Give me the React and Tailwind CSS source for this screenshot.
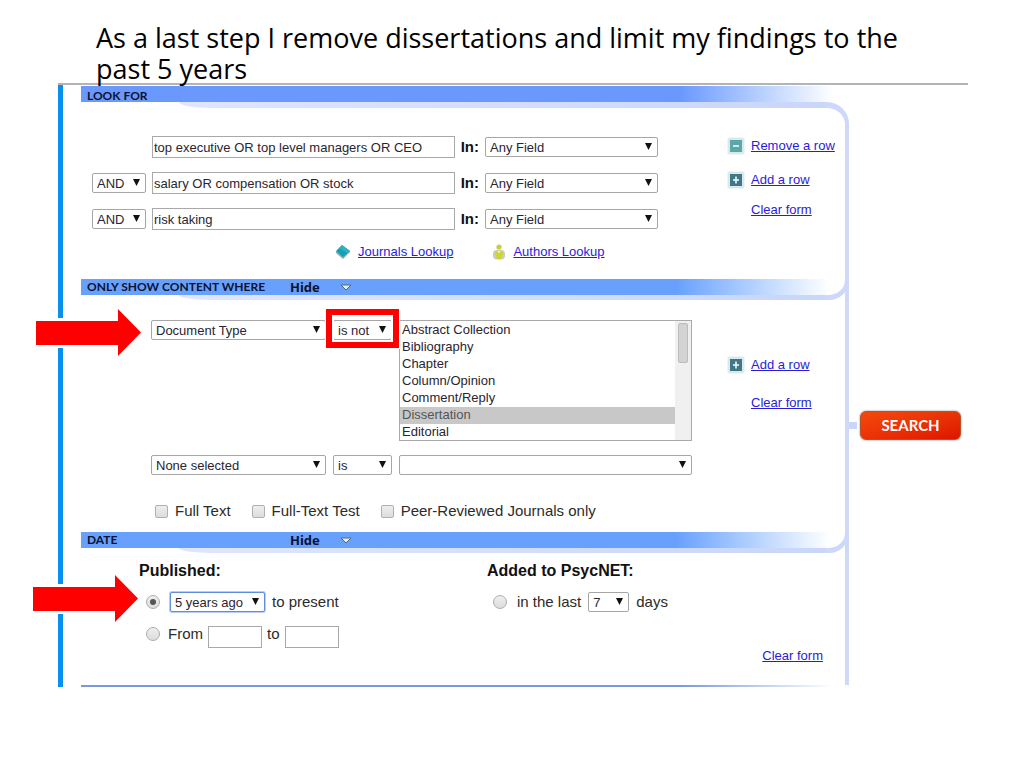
import React from 'react';

const documentTypes = [
  'Abstract Collection',
  'Bibliography',
  'Chapter',
  'Column/Opinion',
  'Comment/Reply',
  'Dissertation',
  'Editorial',
];

const Select = ({ label, value, className = '', selectClassName = 'border-[#a6a6a6]' }) => {
  return (
    <div className={`relative shrink-0 ${className}`}>
      <select
        aria-label={label}
        defaultValue={value}
        className={`block h-5 w-full appearance-none rounded-xs border bg-white pt-px pl-1 text-[13px] leading-[17px] text-[#2a2530] ${selectClassName}`}
      >
        <option value={value}>{value}</option>
      </select>
      <svg className="pointer-events-none absolute top-1.5 right-1.5 h-[7px] w-[7px]" viewBox="0 0 7 7">
        <path d="M0 0h7L3.5 7z" fill="#111" />
      </svg>
    </div>
  );
};

const TextBox = ({ label, value = '', className = '' }) => {
  return (
    <input
      type="text"
      aria-label={label}
      defaultValue={value}
      className={`h-[22px] border border-[#a9a9a9] bg-white px-px text-[13px] text-[#2a2530] ${className}`}
    />
  );
};

const Link = ({ children, className = '' }) => {
  return (
    <a href="#" className={`text-[13px] leading-5 text-[#2a1bd8] underline ${className}`}>
      {children}
    </a>
  );
};

const RowIcon = ({ kind }) => {
  return (
    <svg className="h-[18px] w-[18px]" viewBox="0 0 18 18">
      <rect width="18" height="18" rx="3" fill="#eef5f7" />
      <rect x="1" y="1" width="16" height="16" rx="2" fill="#d9e9ed" />
      <rect x="3" y="3" width="12" height="12" fill={kind === 'remove' ? '#5aa9a6' : '#417787'} />
      <path d="M6 9h6" stroke="#e9fbfb" strokeWidth="1.6" />
      {kind === 'add' && <path d="M9 5.5v7" stroke="#e9fbfb" strokeWidth="1.6" />}
    </svg>
  );
};

const RowLink = ({ kind, children }) => {
  return (
    <div className="flex h-5 items-center gap-1.5">
      {kind ? <RowIcon kind={kind} /> : <span className="w-[18px]" />}
      <Link>{children}</Link>
    </div>
  );
};

const Arrow = ({ className }) => {
  return (
    <svg className={`absolute right-full h-[47px] w-[105px] max-w-none ${className}`} viewBox="0 0 105 47">
      <rect y="9" width="82" height="30" fill="#fff" />
      <path d="M0 12h82V0l23 23.5L82 47V36H0z" fill="#fe0000" />
    </svg>
  );
};

const SectionTitle = ({ children }) => {
  return (
    <h2 className="pl-1.5 font-['Lato'] text-xs leading-4 font-bold whitespace-nowrap text-[#0b1230]">{children}</h2>
  );
};

const FoldHeader = ({ title }) => {
  return (
    <div className="relative h-[21px] border-r-4 border-[#cdd8fa]">
      <div className="flex h-4 items-center bg-linear-to-r from-[#68a1fd] from-78% to-white to-98%">
        <div className="w-[209px]">
          <SectionTitle>{title}</SectionTitle>
        </div>
        <button type="button" className="flex items-center gap-5 font-['Noto_Sans'] text-[13px] leading-4 font-bold text-[#0b1230]">
          Hide
          <svg className="h-[7px] w-3" viewBox="0 0 12 7">
            <path d="M1 1h10L6 6z" fill="#e8efe0" stroke="#47688f" />
          </svg>
        </button>
      </div>
      <div className="mr-4 ml-[98px] h-[5px] rounded-bl-[32px_5px] bg-linear-to-r from-[#dfe5fc] to-[#c9d6fa]" />
      <div className="absolute top-0 -right-1 h-[21px] w-6 rounded-br-[20px] border-r-4 border-b-[5px] border-[#cdd8fa]" />
    </div>
  );
};

const CheckBox = ({ children }) => {
  return (
    <label className="flex items-center gap-[7px]">
      <input
        type="checkbox"
        className="h-[13px] w-[13px] appearance-none rounded-xs border border-[#b0b0b0] bg-linear-to-b from-[#eeeeee] to-[#dcdcdc]"
      />
      {children}
    </label>
  );
};

const Radio = ({ label, name, checked }) => {
  return (
    <input
      type="radio"
      name={name}
      aria-label={label}
      defaultChecked={checked}
      className="flex h-3.5 w-3.5 shrink-0 appearance-none items-center justify-center rounded-full border border-[#adadad] bg-linear-to-b from-[#eeeeee] to-[#dcdcdc] checked:before:h-1.5 checked:before:w-1.5 checked:before:rounded-full checked:before:bg-[#555555]"
    />
  );
};

const SearchRow = ({ operator, value }) => {
  return (
    <div className="flex h-[22px] items-center gap-1.5">
      {operator ? <Select label="Operator" value={operator} className="w-[54px]" /> : <span className="w-[54px]" />}
      <TextBox label="Search term" value={value} className="min-w-0 flex-1" />
      <span className="text-[15px] font-bold text-[#111]">In:</span>
      <Select label="Field" value="Any Field" className="w-[173px]" />
    </div>
  );
};

const LookFor = () => {
  return (
    <section>
      <div className="h-4 bg-linear-to-r from-[#6b98fd] from-78% to-white to-98% pt-0.5">
        <SectionTitle>LOOK FOR</SectionTitle>
      </div>
      <div className="ml-[98px] flex h-[23px]">
        <div className="h-1.5 flex-1 rounded-bl-[32px_6px] bg-linear-to-r from-[#dfe5fc] to-[#c9d6fa]" />
        <div className="w-6 rounded-tr-[22px] border-t-[6px] border-r-4 border-[#cdd8fa]" />
      </div>
      <div className="flex border-r-4 border-[#cdd8fa] pt-[11px] pb-[17px]">
        <div className="flex-1 pr-[69px] pl-[11px]">
          <div className="flex flex-col gap-3.5">
            <SearchRow value="top executive OR top level managers OR CEO" />
            <SearchRow operator="AND" value="salary OR compensation OR stock" />
            <SearchRow operator="AND" value="risk taking" />
          </div>
          <div className="mt-3 flex h-5 items-center pl-[243px]">
            <svg className="mr-[7px] h-4 w-4" viewBox="0 0 16 16">
              <path d="M1 9l7 6 7-7v-1.500L8 12 1 7z" fill="#8fa9b0" />
              <path d="M7 1l8 6-7 6-7-6z" fill="#12a0b4" />
              <path d="M7 1l8 6-3 2-8-5z" fill="#2fb0c0" />
            </svg>
            <Link>Journals Lookup</Link>
            <svg className="mr-2 ml-10 h-4 w-3" viewBox="0 0 12 16">
              <rect y="6" width="12" height="9.500" rx="4" fill="#c9cdbb" />
              <circle cx="6" cy="3" r="2.600" fill="#c8ce3a" />
              <path d="M3.500 7h5l2 3.500-2 1V15h-5v-3.500l-2-1z" fill="#cdd62e" />
              <path d="M4.500 7h3L6 9.500z" fill="#f4f6cf" />
            </svg>
            <Link>Authors Lookup</Link>
          </div>
        </div>
        <div className="flex w-[118px] flex-col">
          <RowLink kind="remove">Remove a row</RowLink>
          <div className="mt-3.5">
            <RowLink kind="add">Add a row</RowLink>
          </div>
          <div className="mt-2.5">
            <RowLink>Clear form</RowLink>
          </div>
        </div>
      </div>
    </section>
  );
};

const ContentFilter = () => {
  return (
    <section>
      <FoldHeader title="ONLY SHOW CONTENT WHERE" />
      <div className="flex border-r-4 border-[#cdd8fa] pt-5 pb-[11px]">
        <div className="flex-1 pr-[35px] pl-[70px]">
          <div className="flex items-start gap-[7px]">
            <div className="relative">
              <Arrow className="-top-[11px] mr-2.5" />
              <Select label="Limit by" value="Document Type" className="w-[175px]" />
            </div>
            <div className="relative z-10">
              <Select label="Condition" value="is not" className="w-[59px]" />
              <div className="pointer-events-none absolute -inset-x-[7px] -top-[11px] -bottom-2 border-[6px] border-[#fe0000] shadow-[0_0_0_1px_white,inset_0_0_0_2px_white]" />
            </div>
            <div className="flex h-[121px] min-w-0 flex-1 border border-[#a9a9a9]">
              <select
                multiple
                size={7}
                aria-label="Document types"
                defaultValue={['Dissertation']}
                className="h-full min-w-0 flex-1 overflow-hidden bg-white pt-px text-[13px] text-[#2a2530]"
              >
                {documentTypes.map((type) => (
                  <option
                    key={type}
                    className="h-[17px] min-h-0 px-0.5 py-0 leading-[17px] checked:bg-[#c8c8c8] checked:bg-linear-to-r checked:from-[#c8c8c8] checked:to-[#c8c8c8] checked:text-[#555555]"
                  >
                    {type}
                  </option>
                ))}
              </select>
              <div className="w-4 bg-[#f0f0f0] px-[3px] pt-0.5">
                <div className="h-10 rounded-xs border border-[#bcbcbc] bg-[#d3d3d3]" />
              </div>
            </div>
          </div>
          <div className="mt-3.5 flex gap-[7px]">
            <Select label="Limit by" value="None selected" className="w-[175px]" />
            <Select label="Condition" value="is" className="w-[59px]" />
            <Select label="Value" value="" className="flex-1" />
          </div>
          <div className="mt-[26px] flex h-5 items-center gap-[21px] pl-1 text-[15px] whitespace-nowrap text-[#2b2b2b]">
            <CheckBox>Full Text</CheckBox>
            <CheckBox>Full-Text Test</CheckBox>
            <CheckBox>Peer-Reviewed Journals only</CheckBox>
          </div>
        </div>
        <div className="flex w-[118px] flex-col gap-[18px] pt-[35px]">
          <RowLink kind="add">Add a row</RowLink>
          <RowLink>Clear form</RowLink>
        </div>
      </div>
    </section>
  );
};

const DateFilter = () => {
  return (
    <section>
      <FoldHeader title="DATE" />
      <div className="flex border-r-4 border-[#cdd8fa] pt-2 pb-[37px] text-[15px] text-[#2b2b2b]">
        <div className="w-[406px] pl-[58px]">
          <h3 className="text-base leading-5 font-bold text-[#111]">Published:</h3>
          <div className="relative mt-[11px] ml-[7px] flex h-5 items-center">
            <Arrow className="-top-[17px] mr-2" />
            <Radio label="Published since" name="published" checked />
            <Select
              label="First year"
              value="5 years ago"
              className="mr-[7px] ml-2.5 w-[95px]"
              selectClassName="border-[#5f8ee0] ring-1 ring-[#b9cdf3]"
            />
            to present
          </div>
          <div className="mt-3.5 ml-[7px] flex h-[22px] items-start">
            <label className="flex h-4 items-center gap-2">
              <Radio label="Published between" name="published" />
              From
            </label>
            <TextBox label="From year" className="mx-[5px] w-[54px]" />
            <span className="leading-4">to</span>
            <TextBox label="To year" className="mx-[5px] w-[54px]" />
          </div>
        </div>
        <div>
          <h3 className="text-base leading-5 font-bold text-[#111]">Added to PsycNET:</h3>
          <div className="mt-[11px] ml-1.5 flex h-5 items-center">
            <label className="flex items-center gap-2.5">
              <Radio label="Added in the last" name="added" />
              in the last
            </label>
            <Select label="Number of days" value="7" className="mx-[7px] w-[41px]" />
            days
          </div>
        </div>
        <Link className="mr-[22px] -mb-[18px] ml-auto self-end">Clear form</Link>
      </div>
      <div className="h-0.5 bg-linear-to-r from-[#7799dd] from-78% to-white to-98%" />
    </section>
  );
};

export default function App() {
  return (
    <div className="bg-white font-['Liberation_Sans',sans-serif]">
      <h1 className="-mb-px pt-[22px] pr-20 pl-24 font-['Open_Sans'] text-[27px] leading-[31px] text-black">
        As a last step I remove dissertations and limit my findings to the past 5 years
      </h1>
      <main className="mr-14 ml-[58px] border-t-2 border-[#b4b4b4]">
        <div className="flex border-l-[5px] border-[#0a8fec] pt-px pl-[18px]">
          <form className="flex-1">
            <LookFor />
            <ContentFilter />
            <DateFilter />
          </form>
          <div className="w-[119px]">
            <div className="mt-[325px] flex items-center">
              <div className="h-[7px] w-2 bg-[#c9d6fa]" />
              <button
                type="submit"
                className="ml-[3px] h-[29px] w-[101px] rounded-md border border-[#b5532a] bg-linear-to-br from-[#f6480c] to-[#de1200] font-['Lato'] text-[15px] leading-none font-bold text-white shadow-[0_0_2px_#777777]"
              >
                SEARCH
              </button>
            </div>
          </div>
        </div>
      </main>
    </div>
  );
}
